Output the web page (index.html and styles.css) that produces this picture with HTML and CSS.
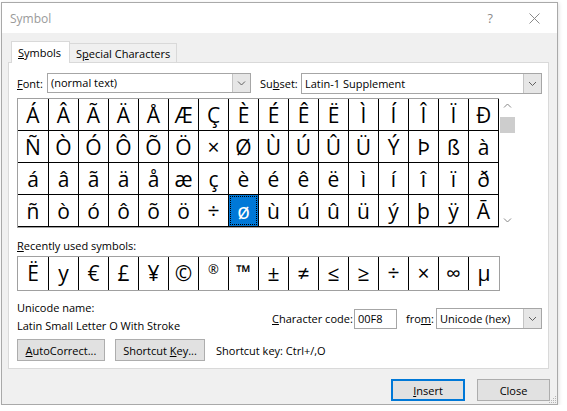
FILE: index.html
```html
<!DOCTYPE html>
<html>
<head>
<meta charset="utf-8">
<title>Symbol</title>
<link rel="stylesheet" href="styles.css">
</head>
<body>
<div class="window">
  <div class="titlebar">
    <span class="title">Symbol</span>
    <span class="help">?</span>
    <svg class="close" width="11" height="11" viewBox="0 0 11 11"><path d="M0.5 0.5L10.5 10.5M10.5 0.5L0.5 10.5" stroke="#8a8a8a" stroke-width="1" fill="none"/></svg>
  </div>
  <div class="tabs">
    <div class="tab tab-active"><u>S</u>ymbols</div>
    <div class="tab tab-special">S<u>p</u>ecial Characters</div>
  </div>
  <div class="panel">
    <div class="fontrow">
      <span class="lbl-font"><u>F</u>ont:</span>
      <div class="combo combo-font"><span class="val">(normal text)</span><span class="drop"><svg width="17" height="18" viewBox="0 0 17 18"><path d="M5 7.5L8.5 11L12 7.5" stroke="#606060" fill="none"/></svg></span></div>
      <span class="lbl-subset">Su<u>b</u>set:</span>
      <div class="combo combo-subset"><span class="val">Latin-1 Supplement</span><span class="drop"><svg width="17" height="19" viewBox="0 0 17 19"><path d="M5 8L8.5 11.5L12 8" stroke="#606060" fill="none"/></svg></span></div>
    </div>
    <div class="gridwrap">
      <div class="grid">
        <div class="cell">Á</div><div class="cell">Â</div><div class="cell">Ã</div><div class="cell">Ä</div><div class="cell">Å</div><div class="cell">Æ</div><div class="cell">Ç</div><div class="cell">È</div><div class="cell">É</div><div class="cell">Ê</div><div class="cell">Ë</div><div class="cell">Ì</div><div class="cell">Í</div><div class="cell">Î</div><div class="cell">Ï</div><div class="cell">Ð</div>
        <div class="cell">Ñ</div><div class="cell">Ò</div><div class="cell">Ó</div><div class="cell">Ô</div><div class="cell">Õ</div><div class="cell">Ö</div><div class="cell">×</div><div class="cell">Ø</div><div class="cell">Ù</div><div class="cell">Ú</div><div class="cell">Û</div><div class="cell">Ü</div><div class="cell">Ý</div><div class="cell">Þ</div><div class="cell">ß</div><div class="cell">à</div>
        <div class="cell">á</div><div class="cell">â</div><div class="cell">ã</div><div class="cell">ä</div><div class="cell">å</div><div class="cell">æ</div><div class="cell">ç</div><div class="cell">è</div><div class="cell">é</div><div class="cell">ê</div><div class="cell">ë</div><div class="cell">ì</div><div class="cell">í</div><div class="cell">î</div><div class="cell">ï</div><div class="cell">ð</div>
        <div class="cell">ñ</div><div class="cell">ò</div><div class="cell">ó</div><div class="cell">ô</div><div class="cell">õ</div><div class="cell">ö</div><div class="cell">÷</div><div class="cell selected"><span class="focus">ø</span></div><div class="cell">ù</div><div class="cell">ú</div><div class="cell">û</div><div class="cell">ü</div><div class="cell">ý</div><div class="cell">þ</div><div class="cell">ÿ</div><div class="cell">Ā</div>
      </div>
      <div class="scrollbar">
        <svg class="sb-arrow" width="17" height="16" viewBox="0 0 17 16"><path d="M5 9.5L8.5 6L12 9.5" stroke="#888" fill="none"/></svg>
        <div class="sb-track"><div class="sb-thumb"></div></div>
        <svg class="sb-arrow" width="17" height="16" viewBox="0 0 17 16"><path d="M5 6.5L8.5 10L12 6.5" stroke="#888" fill="none"/></svg>
      </div>
    </div>
    <div class="recent-label"><u>R</u>ecently used symbols:</div>
    <div class="recent">
      <div class="rcell">Ë</div><div class="rcell">y</div><div class="rcell">€</div><div class="rcell">£</div><div class="rcell">¥</div><div class="rcell">©</div><div class="rcell rsmall">®</div><div class="rcell rsmall tm">™</div><div class="rcell">±</div><div class="rcell">≠</div><div class="rcell">≤</div><div class="rcell">≥</div><div class="rcell">÷</div><div class="rcell">×</div><div class="rcell">∞</div><div class="rcell">µ</div>
    </div>
    <div class="info">
      <div class="names">
        <div>Unicode name:</div>
        <div>Latin Small Letter O With Stroke</div>
      </div>
      <div class="code">
        <span class="lbl-code"><u>C</u>haracter code:</span>
        <div class="textbox">00F8</div>
        <span class="lbl-from">fro<u>m</u>:</span>
        <div class="combo combo-from"><span class="val">Unicode (hex)</span><span class="drop"><svg width="17" height="19" viewBox="0 0 17 19"><path d="M5 8L8.5 11.5L12 8" stroke="#606060" fill="none"/></svg></span></div>
      </div>
    </div>
    <div class="btnrow">
      <button class="btn btn-auto"><u>A</u>utoCorrect...</button>
      <button class="btn btn-short">Shortcut <u>K</u>ey...</button>
      <span class="shortcut">Shortcut key: Ctrl+/,O</span>
    </div>
  </div>
  <div class="dlgbtns">
    <button class="btn btn-insert"><u>I</u>nsert</button>
    <button class="btn btn-close">Close</button>
  </div>
  <svg class="grip" width="9" height="9" viewBox="0 0 9 9"><g fill="#b4b4b4"><rect x="7" y="1" width="1" height="1"/><rect x="5" y="3" width="1" height="1"/><rect x="7" y="3" width="1" height="1"/><rect x="3" y="5" width="1" height="1"/><rect x="5" y="5" width="1" height="1"/><rect x="7" y="5" width="1" height="1"/><rect x="1" y="7" width="1" height="1"/><rect x="3" y="7" width="1" height="1"/><rect x="5" y="7" width="1" height="1"/><rect x="7" y="7" width="1" height="1"/></g></svg>
</div>
</body>
</html>
```
FILE: styles.css
```css
* { box-sizing: border-box; }
html, body { margin: 0; padding: 0; background: #ffffff; }
body {
  font-family: "Open Sans", "Noto Sans", sans-serif;
  font-size: 11px;
  color: #000;
}
u { text-decoration: underline; text-underline-offset: 1px; text-decoration-thickness: 1px; }

.window {
  position: relative;
  margin: 2px 0 0 1px;
  width: 557px;
  height: 403px;
  border: 1px solid #a9a9a9;
  background: #f0f0f0;
  box-shadow: 1px 1px 4px rgba(0,0,0,0.12);
}

.titlebar {
  height: 30px;
  background: #fff;
  display: flex;
  align-items: center;
}
.title { padding-left: 8px; color: #9a9a9a; font-size: 12px; }
.help { margin-left: auto; color: #8a8a8a; font-size: 12.5px; margin-right: 36px; }
.close { margin-right: 17px; }

.tabs {
  margin-top: 8px;
  margin-left: 9px;
  height: 21px;
  display: flex;
  align-items: flex-end;
}
.tab {
  border: 1px solid #d9d9d9;
  border-bottom: none;
  white-space: nowrap;
}
.tab-active {
  position: relative;
  z-index: 1;
  width: 59px;
  height: 22px;
  margin-bottom: -1px;
  background: #fff;
  padding-left: 6px;
  line-height: 21px;
}
.tab-special {
  width: 107px;
  height: 19px;
  border-left: none;
  background: #f0f0f0;
  padding-left: 6px;
  line-height: 19px;
}

.panel {
  margin-left: 6px;
  width: 541px;
  height: 307px;
  background: #fff;
  border: 1px solid #d9d9d9;
  padding: 10px 6px 0 8px;
}

.fontrow {
  display: flex;
  align-items: center;
  height: 20px;
}
.lbl-font { width: 30px; }
.lbl-subset { width: 41px; margin-left: 9px; white-space: nowrap; }
.combo {
  display: flex;
  height: 20px;
  border: 1px solid #a6a6a6;
  background: #fff;
}
.combo .val { flex: 1; padding-left: 3px; line-height: 18px; white-space: nowrap; overflow: hidden; }
.combo .drop { width: 18px; background: #e6e6e6; border-left: 1px solid #c4c4c4; display: flex; align-items: center; }
.combo-font { width: 204px; }
.combo-subset { width: 241px; height: 21px; }
.combo-subset .val { line-height: 19px; }

.gridwrap {
  margin-top: 5px;
  display: flex;
}
.grid {
  display: grid;
  grid-template-columns: 31px repeat(15, 30px);
  border-top: 1px solid #a0a0a0;
  border-left: 1px solid #a0a0a0;
  border-bottom: 1px solid #a0a0a0;
}
.cell {
  height: 32px;
  border-right: 1px solid #000;
  border-bottom: 1px solid #000;
  font-size: 21px;
  line-height: 30px;
  padding-top: 1px;
  text-align: center;
}
.cell.selected {
  background: #0078d7;
  color: #fff;
  padding: 1px;
}
.cell.selected .focus {
  display: block;
  height: 100%;
  border: 1px dotted #000;
  line-height: 28px;
}
.scrollbar {
  width: 17px;
  height: 130px;
  display: flex;
  flex-direction: column;
  background: #fff;
}
.sb-arrow { display: block; flex: none; }
.sb-track { flex: 1; padding: 3px 1px 0 1px; }
.sb-thumb { height: 16px; background: #cdcdcd; }

.recent-label {
  margin-top: 10px;
  line-height: 16px;
}
.recent {
  margin-top: 2px;
  display: flex;
  width: 483px;
  height: 35px;
  border: 1px solid #a0a0a0;
}
.rcell {
  width: 30px;
  height: 33px;
  border-right: 1px solid #000;
  font-size: 21px;
  line-height: 32px;
  text-align: center;
}
.rcell:first-child { width: 31px; }
.rcell:last-child { border-right: none; }
.rcell.rsmall { font-size: 13px; line-height: 24px; }
.rcell.tm { font-size: 19px; font-weight: 700; line-height: 30px; }

.info {
  margin-top: 8px;
  display: flex;
  align-items: center;
}
.names { line-height: 18px; }
.code {
  margin-left: auto;
  margin-top: 3px;
  display: flex;
  align-items: center;
  height: 21px;
}
.lbl-code { width: 82px; white-space: nowrap; }
.textbox {
  width: 43px;
  height: 20px;
  border: 1px solid #a6a6a6;
  padding-left: 3px;
  line-height: 18px;
}
.lbl-from { width: 30px; margin-left: 9px; }
.combo-from { width: 106px; height: 21px; }
.combo-from .val { line-height: 19px; }

.btnrow {
  margin-top: 4px;
  display: flex;
  align-items: center;
  height: 22px;
}
.btn {
  font-family: inherit;
  font-size: 11px;
  color: #000;
  background: #e1e1e1;
  border: 1px solid #adadad;
  height: 22px;
  padding: 0;
  text-align: center;
}
.btn-auto { width: 88px; }
.btn-short { width: 90px; margin-left: 10px; }
.shortcut { margin-left: 11px; }

.dlgbtns {
  margin-top: 10px;
  display: flex;
  justify-content: flex-end;
  padding-right: 7px;
}
.btn-insert { width: 74px; border: 2px solid #0078d7; }
.btn-close { width: 73px; margin-left: 12px; }

.grip { position: absolute; right: 0; bottom: 0; }
```
